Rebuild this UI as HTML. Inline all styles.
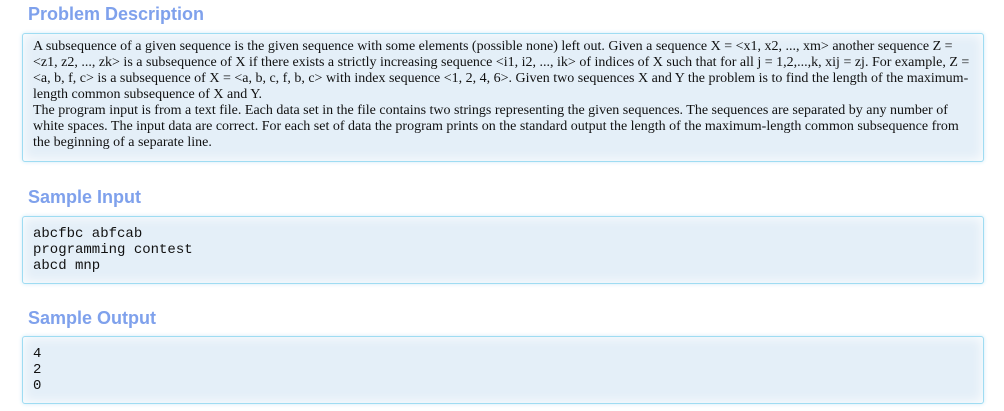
<!DOCTYPE html>
<html><head><meta charset="utf-8"><style>
body{margin:0;background:#fff;width:1004px;height:411px;overflow:hidden;position:relative;font-family:"Liberation Serif",serif}
h2{position:absolute;left:28px;margin:0;font:bold 18px "Liberation Sans",sans-serif;color:#7fa1ec;line-height:22px}
.box{position:absolute;left:22px;width:940px;border:1px solid #9fdcf2;border-radius:3px;background:#e4eff8;box-shadow:inset 0 0 12px #fff,0 0 4px #cfeaf7;padding:5px 10px 6px 10px;color:#111}
.desc{font-size:14px;line-height:16px;top:33px;height:116px;white-space:nowrap}
.mono{font-family:"Liberation Mono",monospace;font-size:14px;line-height:16px;white-space:pre}
</style></head><body>
<h2 style="top:3px">Problem Description</h2>
<div class="box desc">A subsequence of a given sequence is the given sequence with some elements (possible none) left out. Given a sequence X = &lt;x1, x2, ..., xm&gt; another sequence Z =<br>&lt;z1, z2, ..., zk&gt; is a subsequence of X if there exists a strictly increasing sequence &lt;i1, i2, ..., ik&gt; of indices of X such that for all j = 1,2,...,k, xij = zj. For example, Z =<br>&lt;a, b, f, c&gt; is a subsequence of X = &lt;a, b, c, f, b, c&gt; with index sequence &lt;1, 2, 4, 6&gt;. Given two sequences X and Y the problem is to find the length of the maximum-<br>length common subsequence of X and Y.<br>The program input is from a text file. Each data set in the file contains two strings representing the given sequences. The sequences are separated by any number of<br>white spaces. The input data are correct. For each set of data the program prints on the standard output the length of the maximum-length common subsequence from<br>the beginning of a separate line.</div>
<h2 style="top:186px">Sample Input</h2>
<div class="box mono" style="top:216px;height:54px;padding-top:9px;padding-bottom:3px">abcfbc abfcab
programming contest
abcd mnp</div>
<h2 style="top:307px">Sample Output</h2>
<div class="box mono" style="top:336px;height:54px;padding-top:9px;padding-bottom:3px">4
2
0</div>
</body></html>
